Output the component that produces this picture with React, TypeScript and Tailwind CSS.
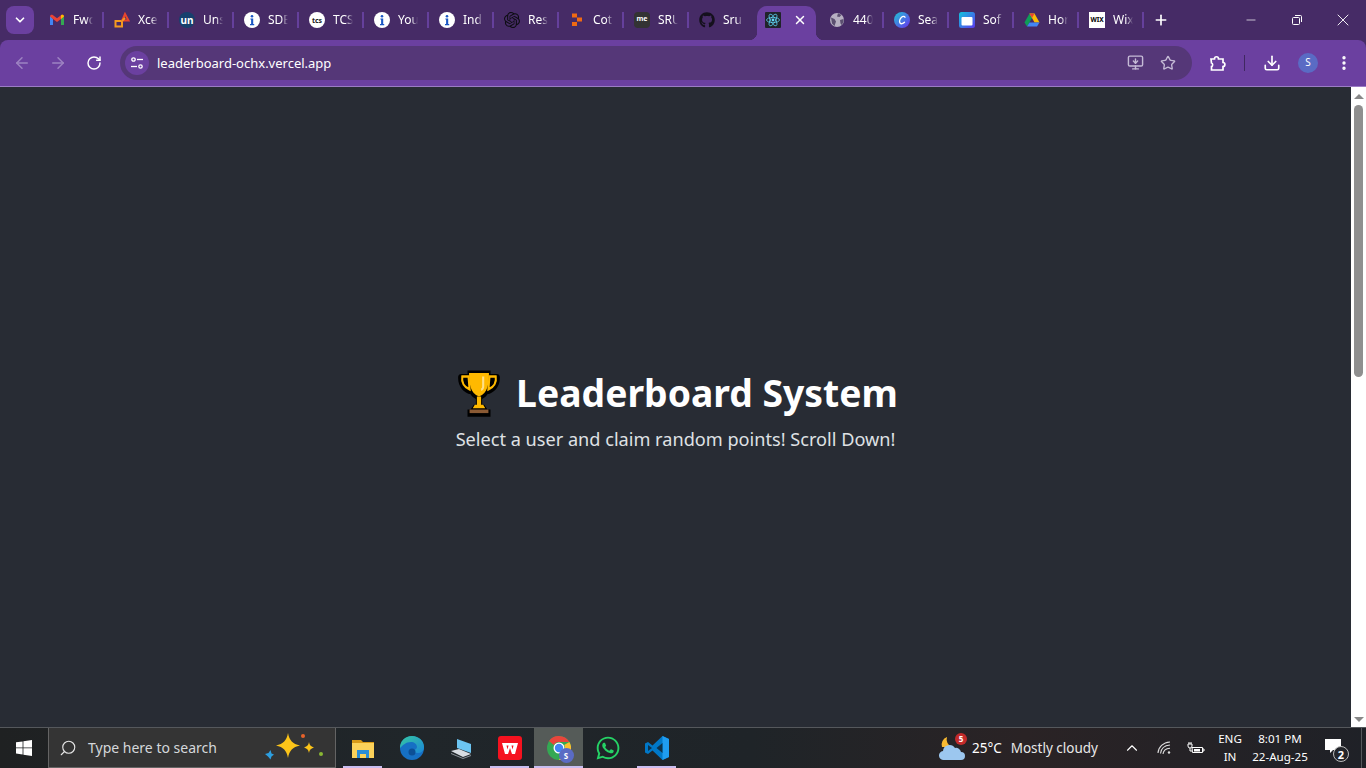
import type { ReactNode } from "react";
import { ArrowLeft, ArrowRight, ChevronDown, ChevronUp, Download, EllipsisVertical, MonitorDown, Minus, Plus, RotateCw, Search, Star, X } from "lucide-react";
import { FaGithub, FaWhatsapp } from "react-icons/fa";
import { SiOpenai } from "react-icons/si";

const font = "font-['Noto_Sans','Open_Sans',sans-serif]";

function InfoIcon() {
  return (
    <svg width="16" height="16" viewBox="0 0 16 16">
      <circle cx="8" cy="8" r="8" fill="#fff" />
      <circle cx="8" cy="4.2" r="1.3" fill="#1a56c4" />
      <path d="M6.4 6.4h2.8v5.6h1v1.2H6v-1.2h1.1V7.6h-.7z" fill="#1a56c4" />
    </svg>
  );
}

function GmailIcon() {
  return (
    <svg width="16" height="16" viewBox="0 0 16 16">
      <path d="M1 4v9h3V7z" fill="#4285f4" />
      <path d="M15 4v9h-3V7z" fill="#34a853" />
      <path d="M1 4.5 4 7l4 3 4-3 3-2.5c0-1.5-1.6-2.2-2.7-1.4L8 6.2 3.7 3.100C2.600 2.300 1 3 1 4.500z" fill="#ea4335" />
      <path d="M12 7l3-2.500c0-1.500-1.600-2.200-2.700-1.400L12 3.300z" fill="#fbbc04" />
    </svg>
  );
}

function XceIcon() {
  return (
    <svg width="16" height="16" viewBox="0 0 16 16" fill="none" strokeWidth="2">
      <path d="M1.500 9h6.500v5.500H1.500z" stroke="#f59a1f" />
      <path d="M8 9l3-7 3.500 6.500H8" stroke="#e8452c" />
      <path d="M8 9l3-3" stroke="#f59a1f" />
    </svg>
  );
}

function UnIcon() {
  return (
    <div className="flex h-4 w-4 items-center justify-center rounded-full bg-[#17406d] text-[10px] font-bold leading-none text-white">un</div>
  );
}

function TcsIcon() {
  return (
    <div className="flex h-4 w-4 items-center justify-center rounded-full bg-white text-[7px] font-bold leading-none text-[#222]">tcs</div>
  );
}

function CodeIcon() {
  return (
    <svg width="16" height="16" viewBox="0 0 16 16" fill="#f06a12">
      <rect x="3" y="1.500" width="5" height="4" />
      <rect x="8" y="5.500" width="5" height="4" />
      <rect x="3" y="10" width="5" height="4" />
    </svg>
  );
}

function MeIcon() {
  return (
    <div className="flex h-4 w-4 items-center justify-center rounded-[4px] bg-[#333] pb-[3px] text-[7px] font-bold leading-none text-white">me</div>
  );
}

function ReactIcon() {
  return (
    <svg width="16" height="16" viewBox="0 0 16 16" fill="none">
      <rect width="16" height="16" rx="1" fill="#20232a" />
      <circle cx="8" cy="8" r="1.400" fill="#61dafb" />
      <g stroke="#61dafb" strokeWidth="0.700">
        <ellipse cx="8" cy="8" rx="6.500" ry="2.600" />
        <ellipse cx="8" cy="8" rx="6.500" ry="2.600" transform="rotate(60 8 8)" />
        <ellipse cx="8" cy="8" rx="6.500" ry="2.600" transform="rotate(120 8 8)" />
      </g>
    </svg>
  );
}

function GlobeIcon() {
  return (
    <svg width="16" height="16" viewBox="0 0 16 16">
      <circle cx="8" cy="8" r="7" fill="#b7b0c2" />
      <path d="M2 5.500 5.500 7 7 9.500 5.500 14 3 11.500zM9 1.200 12.500 3 10.500 5 8 4.500zM11 8l3.500-1c.4 2.400-.4 4.600-2 6l-1-1.500z" fill="#5b4f70" />
    </svg>
  );
}

function CanvaIcon() {
  return (
    <svg width="16" height="16" viewBox="0 0 16 16">
      <defs>
        <linearGradient id="canva" x1="0" y1="0" x2="1" y2="1">
          <stop offset="0" stopColor="#1fc7d4" />
          <stop offset="1" stopColor="#6a2ff0" />
        </linearGradient>
      </defs>
      <circle cx="8" cy="8" r="8" fill="url(#canva)" />
      <path d="M11 5.300C10.500 4 8.800 4 7.500 5.200 5.800 6.700 5 9.500 6 11c1 1.300 3 .8 4.500-.8" fill="none" stroke="#fff" strokeWidth="1.300" strokeLinecap="round" />
    </svg>
  );
}

function SoftrIcon() {
  return (
    <svg width="16" height="16" viewBox="0 0 16 16">
      <defs>
        <linearGradient id="sof" x1="0" y1="0" x2="1" y2="1">
          <stop offset="0" stopColor="#12c6dc" />
          <stop offset="1" stopColor="#5b36f0" />
        </linearGradient>
      </defs>
      <rect width="16" height="16" rx="2.500" fill="url(#sof)" />
      <rect x="2.500" y="5" width="11" height="8.500" rx="1" fill="#fff" />
    </svg>
  );
}

function DriveIcon() {
  return (
    <svg width="16" height="16" viewBox="0 0 16 16">
      <path d="M5.500 1.500h5L8 6 5.500 10.500 3 14.500.5 10.500z" fill="#0f9d58" />
      <path d="M5.500 1.500h5l5 9h-5z" fill="#fbbc04" />
      <path d="M5.500 1.500h5L8 6z" fill="#ea4335" />
      <path d="M3 14.500l2.500-4h10l-2.500 4z" fill="#4285f4" />
    </svg>
  );
}

function WixIcon() {
  return <div className="flex h-4 w-4 items-center justify-center bg-white text-[6.500px] font-bold leading-none text-black">WIX</div>;
}

const tabs: { icon: ReactNode; title: string; active?: boolean }[] = [
  { icon: <GmailIcon />, title: "Fwd" },
  { icon: <XceIcon />, title: "Xce" },
  { icon: <UnIcon />, title: "Uns" },
  { icon: <InfoIcon />, title: "SDE" },
  { icon: <TcsIcon />, title: "TCS" },
  { icon: <InfoIcon />, title: "You" },
  { icon: <InfoIcon />, title: "Ind" },
  { icon: <SiOpenai size={16} color="#0d0d12" />, title: "Res" },
  { icon: <CodeIcon />, title: "Cot" },
  { icon: <MeIcon />, title: "SRU" },
  { icon: <FaGithub size={16} color="#14101c" />, title: "Sru" },
  { icon: <ReactIcon />, title: "", active: true },
  { icon: <GlobeIcon />, title: "440" },
  { icon: <CanvaIcon />, title: "Sea" },
  { icon: <SoftrIcon />, title: "Sof" },
  { icon: <DriveIcon />, title: "Hor" },
  { icon: <WixIcon />, title: "Wix" },
];

function Tab({ icon, title, active, hideSep }: { icon: ReactNode; title: string; active?: boolean; hideSep?: boolean }) {
  if (active) {
    return (
      <div className="relative flex h-[34px] w-[65px] items-center self-end">
        <div className="absolute bottom-0 left-[-5px] h-2 w-2 bg-[radial-gradient(circle_at_0_0,transparent_8px,#6b40a0_8.500px)]" />
        <div className="mx-[3px] flex h-full w-[59px] items-center rounded-t-[10px] bg-[#6b40a0] pb-[6px] pl-2">
          {icon}
          <X size={14} strokeWidth={2.500} color="#fff" className="ml-[12px]" />
        </div>
        <div className="absolute bottom-0 right-[-5px] h-2 w-2 bg-[radial-gradient(circle_at_100%_0,transparent_8px,#6b40a0_8.500px)]" />
      </div>
    );
  }
  return (
    <div className="flex h-[40px] w-[65px] shrink-0 items-center pl-[10px]">
      <div className="flex h-4 w-4 shrink-0 items-center justify-center">{icon}</div>
      <span className="ml-2 w-[20px] overflow-hidden whitespace-nowrap text-[12px] text-white [mask-image:linear-gradient(to_right,#000_65%,transparent)]">{title}</span>
      {!hideSep && <div className="ml-auto h-4 w-[2px] bg-[#65409c]" />}
    </div>
  );
}

function TabStrip() {
  return (
    <div className="flex h-[40px] items-stretch bg-[#462b66]">
      <div className="flex w-[39px] items-start pl-[6px] pt-[6px]">
        <div className="flex h-[28px] w-[28px] items-center justify-center rounded-lg bg-[#6b40a0]">
          <ChevronDown size={14} strokeWidth={3} color="#fff" />
        </div>
      </div>
      {tabs.map((t, i) => (
        <Tab key={i} icon={t.icon} title={t.title} active={t.active} hideSep={tabs[i + 1]?.active} />
      ))}
      <div className="flex w-[33px] items-center justify-center">
        <Plus size={16} strokeWidth={2.500} color="#fff" />
      </div>
      <div className="ml-auto flex">
        <div className="flex w-[46px] items-center justify-center"><Minus size={14} strokeWidth={1.200} color="#fff" /></div>
        <div className="flex w-[46px] items-center justify-center">
          <svg width="12" height="12" viewBox="0 0 12 12" fill="none" stroke="#fff">
            <rect x="1.500" y="3.500" width="7" height="7" rx="1" />
            <path d="M4 1.500h5.500a1 1 0 0 1 1 1V8" />
          </svg>
        </div>
        <div className="flex w-[46px] items-center justify-center"><X size={20} strokeWidth={1.100} color="#fff" /></div>
      </div>
    </div>
  );
}

function Toolbar() {
  return (
    <div className="flex h-[47px] items-center rounded-t-[8px] border-b border-[#9b7cc4] bg-[#6b40a0] pb-[1px] bg-clip-padding">
      <div className="flex w-[120px] items-center pl-[13px]">
        <ArrowLeft size={18} strokeWidth={2} color="#9d83c2" />
        <ArrowRight size={18} strokeWidth={2} color="#9d83c2" className="ml-[18px]" />
        <RotateCw size={16} strokeWidth={2.200} color="#fff" className="ml-[19px]" />
      </div>
      <div className="flex h-[34px] w-[1072px] items-center rounded-full bg-[#553778] pl-[5px] pr-[16px]">
        <div className="flex h-6 w-6 items-center justify-center rounded-full bg-[#6b40a0]">
          <svg width="14" height="14" viewBox="0 0 14 14" fill="none" stroke="#fff" strokeWidth="1.300">
            <circle cx="3.500" cy="3.500" r="1.700" />
            <path d="M7 3.500h6" />
            <circle cx="10.500" cy="10.500" r="1.700" />
            <path d="M1 10.500h6" />
          </svg>
        </div>
        <span className="ml-2 pt-[2px] text-[13px] text-white">leaderboard-ochx.vercel.app</span>
        <MonitorDown size={17} strokeWidth={2} color="#c5bad6" className="ml-auto" />
        <Star size={16} strokeWidth={2} color="#c5bad6" className="ml-[16px]" />
      </div>
      <div className="relative flex flex-1 items-center">
        <svg width="18" height="18" viewBox="0 0 18 18" fill="none" stroke="#fff" strokeWidth="1.700" className="ml-[17px]">
          <path d="M2 5h3.500c0-3 4-3 4 0H14v3.500c2.500 0 2.500 4 0 4V16H2.500v-3.500c1.500 0 1.500-3.500 0-3.500z" />
        </svg>
        <div className="ml-[17px] h-4 w-[1px] bg-[#3f2860]" />
        <Download size={18} strokeWidth={2.200} color="#fff" className="ml-[18px]" />
        <div className="ml-[17px] flex h-5 w-5 items-center justify-center rounded-full bg-[#5a6bc4] text-[10px] text-white">S</div>
        <EllipsisVertical size={18} strokeWidth={2.500} color="#fff" className="ml-[17px]" />
      </div>
    </div>
  );
}

function Trophy() {
  return (
    <svg width="46" height="52" viewBox="0 0 44 44" preserveAspectRatio="none" className="shrink-0">
      <path d="M11 3h22v3h6c2 0 3 1 3 3 0 8-6 13-12 14-1 2-3 3-5 4v5h2l3 4h3v6H11v-6h3l3-4h2v-5c-2-1-4-2-5-4C8 22 2 17 2 9c0-2 1-3 3-3h6z" fill="#000" />
      <path d="M12.500 5h19c0 9-1 17-9.500 20-8.500-3-9.500-11-9.500-20z" fill="#ffb900" />
      <path d="M6 8h6l1 11C8 17 5 13 6 8zM38 8h-6l-1 11c5-2 8-6 7-11z" fill="#000" stroke="#ffb900" strokeWidth="2" />
      <path d="M20 25h4v7h2l2 3H16l2-3h2z" fill="#ffb900" />
      <rect x="13" y="36" width="18" height="3" fill="#8a5a34" />
      <path d="M25 8h2v8c0 3-2 4-3 4v-2c1 0 1-1 1-2z" fill="#ffe08a" />
    </svg>
  );
}

function Scrollbar() {
  return (
    <div className="flex w-[15px] shrink-0 flex-col items-center bg-white">
      <div className="flex h-[18px] items-center justify-center">
        <div className="h-0 w-0 border-x-[5px] border-b-[5px] border-x-transparent border-b-[#888]" />
      </div>
      <div className="h-[272px] w-[9px] rounded-full bg-[#8f8f8f]" />
      <div className="flex-1" />
      <div className="flex h-[16px] items-center justify-center">
        <div className="h-0 w-0 border-x-[5px] border-t-[5px] border-x-transparent border-t-[#888]" />
      </div>
    </div>
  );
}

function Page() {
  return (
    <div className="flex min-h-0 flex-1 bg-[#282c34]">
      <main className="flex flex-1 flex-col items-center justify-center pt-[6px]">
        <h1 className="flex items-center gap-[14px] pl-[3px] text-[37.300px] font-bold leading-[48px] text-white">
          <Trophy />
          Leaderboard System
        </h1>
        <p className="mt-[7px] text-[18.150px] leading-[27px] text-[#dfe1e4]">Select a user and claim random points! Scroll Down!</p>
      </main>
      <Scrollbar />
    </div>
  );
}

function WinLogo() {
  return (
    <svg width="16" height="16" viewBox="0 0 16 16" fill="#fff">
      <path d="M0 2.300 6.600 1.400V7.500H0zM7.400 1.300 16 0V7.500H7.400zM0 8.300H6.600V14.500L0 13.600zM7.400 8.300H16V16L7.400 14.700z" />
    </svg>
  );
}

function Sparkles() {
  return (
    <svg width="62" height="30" viewBox="0 0 62 30">
      <path d="M1 21l3.500-1 2-3 1 3.500 2.500 1-2.500 2-1 3-2.500-3z" fill="#2d9fe0" />
      <path d="M24 0c1.500 7.500 4.500 11 12 12.500-7.500 1.500-10.500 5-12 12.500-1.500-7.500-4.500-11-12-12.500 7.500-1.500 10.500-5 12-12.500z" fill="#fcc419" />
      <path d="M45 9c.6 3 1.600 4.300 5 5.500-3.400 1.200-4.400 2.500-5 5.500-.6-3-1.600-4.300-5-5.500 3.400-1.200 4.400-2.500 5-5.500z" fill="#fcc419" />
      <circle cx="39" cy="3" r="2" fill="#e8622a" />
      <circle cx="57" cy="21" r="2" fill="#8ab833" />
    </svg>
  );
}

function TaskButton({ children, open, selected }: { children: ReactNode; open?: boolean; selected?: boolean }) {
  return (
    <div className={`relative flex h-full w-[49px] items-center justify-center ${selected ? "bg-[#555b58]" : ""}`}>
      {children}
      {open && <div className={`absolute bottom-0 h-[2px] bg-[#c8bdf0] ${selected ? "inset-x-0" : "inset-x-[5px]"}`} />}
    </div>
  );
}

function ExplorerIcon() {
  return (
    <svg width="24" height="24" viewBox="0 0 24 24">
      <path d="M1 4h9l2 2h11v3H1z" fill="#d99a18" />
      <rect x="1" y="7" width="22" height="15" fill="#fcd25a" />
      <path d="M6 14h12v8h-3v-4H9v4H6z" fill="#2c8ed6" />
    </svg>
  );
}

function EdgeIcon() {
  return (
    <svg width="26" height="26" viewBox="0 0 26 26">
      <defs>
        <linearGradient id="edge" x1="0" y1="0" x2="1" y2="1">
          <stop offset="0" stopColor="#36c8a0" />
          <stop offset="1" stopColor="#1b86d8" />
        </linearGradient>
      </defs>
      <circle cx="13" cy="13" r="12" fill="#1670c4" />
      <path d="M1 13C1 6 6 1 13 1c7 0 12 5 12 11 0 4-3 6-6 6-3 0-5-1-5-3 2 0 4-1 4-3 0-3-3-5-6-5-5 0-8 3-11 6z" fill="url(#edge)" />
      <circle cx="13" cy="17" r="3.500" fill="#0c4f96" />
    </svg>
  );
}

function LaptopIcon() {
  return (
    <svg width="24" height="24" viewBox="0 0 24 24">
      <path d="M8 3l14 5v9L8 12z" fill="#6cc5f2" />
      <path d="M2 15l8-2 12 5-8 3z" fill="#d8dde2" />
      <path d="M2 17l12 5 8-3v1l-8 3-12-5z" fill="#8a9299" />
    </svg>
  );
}

function WpsIcon() {
  return (
    <svg width="24" height="24" viewBox="0 0 24 24">
      <rect width="24" height="24" rx="3" fill="#f5121f" />
      <path d="M4 7h16l-3 11h-3l-2-6-2 6H7z" fill="#fff" />
      <path d="M8.500 9.500h2l-1 4zM13.500 9.500h2l-1 4z" fill="#f5121f" />
    </svg>
  );
}

function ChromeIcon() {
  return (
    <div className="relative h-6 w-6">
      <svg width="24" height="24" viewBox="0 0 24 24">
        <circle cx="12" cy="12" r="12" fill="#34a853" />
        <path d="M12 0a12 12 0 0 1 10.400 6H12a6 6 0 0 0-5.200 3L2 5a12 12 0 0 1 10-5z" fill="#e8453c" />
        <path d="M22.400 6A12 12 0 0 1 12 24l5.200-9a6 6 0 0 0 0-6z" fill="#fbc02d" />
        <circle cx="12" cy="12" r="5.500" fill="#fff" />
        <circle cx="12" cy="12" r="4.200" fill="#4285f4" />
      </svg>
      <div className="absolute -bottom-[3px] -right-[3px] flex h-[15px] w-[15px] items-center justify-center rounded-full bg-[#5a6bc4] text-[8px] font-bold text-white">S</div>
    </div>
  );
}

function VsCodeIcon() {
  return (
    <svg width="24" height="24" viewBox="0 0 24 24">
      <path d="M17.500 0 24 3v18l-6.500 3-10-9.500L3 18l-3-1.500V7.500L3 6l4.500 3.500z" fill="#0078c8" />
      <path d="M17.500 0 24 3v18l-6.500 3z" fill="#1f9cf0" />
      <path d="M3 9l4 3-4 3z M17.500 7l-6 5 6 5z" fill="#0d2a3e" opacity="0.900" />
    </svg>
  );
}

function WeatherIcon() {
  return (
    <div className="relative h-[26px] w-[26px]">
      <svg width="26" height="26" viewBox="0 0 26 26">
        <path d="M8 2a8 8 0 0 0 5 10H3a8 8 0 0 1 5-10z" fill="#f8b931" />
        <path d="M5 25a4.500 4.500 0 0 1-1-9 6.500 6.500 0 0 1 12-3 5 5 0 0 1 6 4 4 4 0 0 1 0 8z" fill="#9cc7ef" />
      </svg>
      <div className="absolute -top-[2px] right-[-2px] flex h-3 w-3 items-center justify-center rounded-full bg-[#c22a2a] text-[8px] font-bold text-white">5</div>
    </div>
  );
}

function Taskbar() {
  return (
    <div className="flex h-[41px] items-stretch border-t border-[#55585c] bg-[linear-gradient(to_right,#1f2122,#20262a_30%,#1f2428_55%,#2a2325_75%,#1f2127)] text-white">
      <div className="flex w-[48px] items-center justify-center"><WinLogo /></div>
      <div className="flex w-[288px] items-center border-x border-b border-[#646464] bg-[#343434] pl-[10px] pr-[9px]">
        <Search size={18} strokeWidth={1.500} color="#e5e5e5" className="-scale-x-100" />
        <span className="ml-[11px] text-[14px] text-[#d4d8db]">Type here to search</span>
        <div className="ml-auto"><Sparkles /></div>
      </div>
      <div className="ml-[2px] flex">
        <TaskButton open><ExplorerIcon /></TaskButton>
        <TaskButton><EdgeIcon /></TaskButton>
        <TaskButton><LaptopIcon /></TaskButton>
        <TaskButton open><WpsIcon /></TaskButton>
        <TaskButton open selected><ChromeIcon /></TaskButton>
        <TaskButton><FaWhatsapp size={26} color="#25d366" /></TaskButton>
        <TaskButton open><VsCodeIcon /></TaskButton>
      </div>
      <div className="ml-auto flex items-center text-[13.500px]">
        <WeatherIcon />
        <span className="ml-[7px] pt-[1px]">25°C</span>
        <span className="ml-[9px] pt-[1px] text-[#e8e8e8]">Mostly cloudy</span>
        <ChevronUp size={18} strokeWidth={1.500} className="ml-[25px]" />
        <svg width="16" height="16" viewBox="0 0 16 16" fill="none" stroke="#ddd" strokeWidth="1.100" className="ml-[16px]">
          <path d="M1 13C1.500 7 6 2.500 13 2M3.500 13.500C4 9 7.500 5.500 13 5M6 14c.3-3 3-5.500 7-5.800" />
          <circle cx="12" cy="12.500" r="1.200" fill="#ddd" stroke="none" />
        </svg>
        <svg width="18" height="12" viewBox="0 0 18 12" fill="none" stroke="#fff" className="ml-[14px]">
          <path d="M5 5.500h10.500v5H5.500zM15.500 7H17v2h-1.500" />
          <rect x="7" y="7" width="6" height="2.500" fill="#fff" stroke="none" />
          <path d="M1 2v2a2 2 0 0 0 4 0V2zM2 2V0M4 2V0M3 6v3h2" />
        </svg>
        <div className="ml-[7px] flex w-[36px] flex-col items-center text-[11.600px] leading-[18px]">
          <span>ENG</span>
          <span>IN</span>
        </div>
        <div className="flex w-[64px] flex-col items-center text-[11.600px] leading-[18px]">
          <span>8:01 PM</span>
          <span>22-Aug-25</span>
        </div>
        <div className="relative ml-[5px] flex h-full w-[32px] items-center justify-center">
          <svg width="16" height="15" viewBox="0 0 16 15" fill="#fff" className="-translate-y-[2px]">
            <path d="M0 0h16v11H8l-3 3v-3H0z" />
          </svg>
          <div className="absolute bottom-[6px] right-0 flex h-[16px] w-[16px] items-center justify-center rounded-full border border-[#bbb] bg-[#23252a] text-[11px] font-bold leading-none">2</div>
        </div>
        <div className="ml-[12px] h-full w-[5px] border-l border-[#55585c]" />
      </div>
    </div>
  );
}

export default function App() {
  return (
    <div className={`flex h-[768px] w-[1366px] flex-col overflow-hidden ${font}`}>
      <div className="bg-[#462b66]">
        <TabStrip />
        <Toolbar />
      </div>
      <Page />
      <Taskbar />
    </div>
  );
}
